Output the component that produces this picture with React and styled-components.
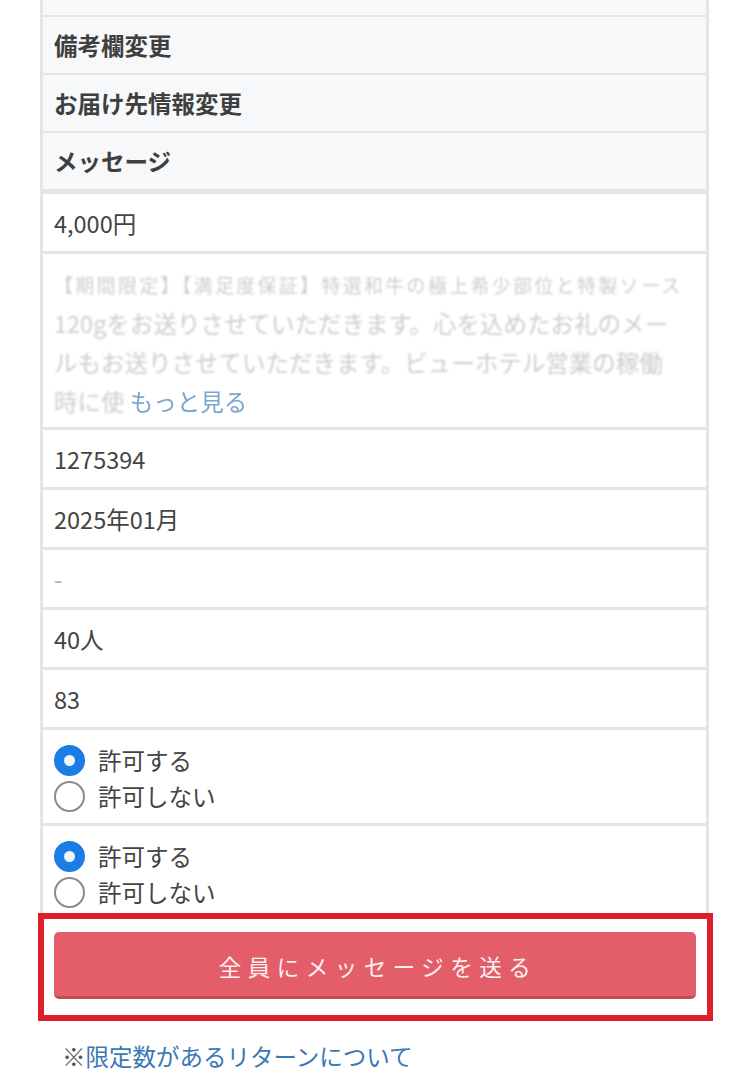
import React from "react";
import styled, { createGlobalStyle } from "styled-components";

const GlobalStyle = createGlobalStyle`
  body {
    margin: 0;
    background: #fff;
    font-family: "Noto Sans CJK JP", "Noto Sans", sans-serif;
    color: #444;
  }
`;

const COLORS = {
  border: "#e5e5e5",
  head: "#f7f8fa",
  text: "#444444",
  blue: "#1a7ee6",
  link: "#3b78b6",
  red: "#dc1f2a",
  button: "#e35e68",
};

// the first heading sits above the visible area, only its lower edge shows
const headers = ["", "備考欄変更", "お届け先情報変更", "メッセージ"];
const values = ["1275394", "2025年01月", "-", "40人", "83"];

const App = () => {
  return (
    <>
      <GlobalStyle />
      <Page>
        <Table>
          {headers.map((h, i) => (
            <HeadRow key={i} $last={i === headers.length - 1}>
              {h}
            </HeadRow>
          ))}
          <Row>4,000円</Row>
          <Description>
            <Blurred>
              <SmallLine>【期間限定】【満足度保証】特選和牛の極上希少部位と特製ソース</SmallLine>
              <br />
              120gをお送りさせていただきます。心を込めたお礼のメー
              <br />
              ルもお送りさせていただきます。ビューホテル営業の稼働
              <br />
              時に使
            </Blurred>{" "}
            <More>もっと見る</More>
          </Description>
          {values.map((v) => (
            <Row key={v} $faint={v === "-"}>
              {v}
            </Row>
          ))}
          <RadioRow>
            <Option>
              <Radio $checked />
              許可する
            </Option>
            <Option>
              <Radio />
              許可しない
            </Option>
          </RadioRow>
          <RadioRow $last>
            <Option>
              <Radio $checked />
              許可する
            </Option>
            <Option>
              <Radio />
              許可しない
            </Option>
          </RadioRow>
        </Table>
        <Highlight>
          <SendButton>全員にメッセージを送る</SendButton>
        </Highlight>
        <Note>
          ※<NoteLink href="#">限定数があるリターンについて</NoteLink>
        </Note>
      </Page>
    </>
  );
};

const Page = styled.div`
  margin-top: -41px;
  padding-bottom: 30px;
`;

const Table = styled.div`
  margin-left: 40px;
  width: 669px;
  box-sizing: border-box;
  border-left: 3px solid ${COLORS.border};
  border-right: 3px solid ${COLORS.border};
`;

const HeadRow = styled.div`
  height: 56px;
  display: flex;
  align-items: center;
  padding-left: 11px;
  background: ${COLORS.head};
  border-bottom: ${(p) => (p.$last ? 5 : 2)}px solid ${COLORS.border};
  font-size: 23.5px;
  font-weight: 700;
  color: #3f3f3f;
`;

const Row = styled.div`
  height: 60px;
  box-sizing: border-box;
  display: flex;
  align-items: center;
  padding: 1px 0 0 11px;
  border-bottom: 3px solid ${COLORS.border};
  font-size: 23.5px;
  color: ${(p) => (p.$faint ? "#aaa" : COLORS.text)};
`;

const Description = styled.div`
  height: 163px;
  padding: 10px 11px 0;
  border-bottom: 3px solid ${COLORS.border};
  font-size: 23.5px;
  line-height: 39px;
  white-space: nowrap;
  overflow: hidden;
`;

const Blurred = styled.span`
  color: #cdcdcd;
  filter: blur(0.9px);
`;

const SmallLine = styled.span`
  font-size: 19px;
  letter-spacing: 2.3px;
`;

const More = styled.span`
  color: #7ba6d2;
  filter: blur(0.5px);
`;

const RadioRow = styled.div`
  padding: 12px 11px ${(p) => (p.$last ? 3 : 9)}px;
  border-bottom: ${(p) => (p.$last ? 0 : 3)}px solid ${COLORS.border};
  display: flex;
  flex-direction: column;
`;

const Option = styled.label`
  display: flex;
  align-items: center;
  gap: 13px;
  height: 36px;
  font-size: 23.5px;
  color: ${COLORS.text};
`;

const Radio = styled.span`
  width: 31px;
  height: 31px;
  box-sizing: border-box;
  border-radius: 50%;
  flex-shrink: 0;
  border: ${(p) => (p.$checked ? `10px solid ${COLORS.blue}` : "2.5px solid #8a8a8a")};
  background: ${(p) => (p.$checked ? "#eef6ff" : "#fff")};
`;

const Highlight = styled.div`
  margin-left: 38px;
  width: 675px;
  height: 108px;
  box-sizing: border-box;
  border: 6px solid ${COLORS.red};
  padding: 13px 11px 16px 10px;
  background: #fff;
`;

const SendButton = styled.button`
  width: 100%;
  height: 67px;
  border: none;
  border-bottom: 3px solid #c04c55;
  border-radius: 5px;
  background: ${COLORS.button};
  color: #fdf0f1;
  font-family: "Noto Sans CJK JP", sans-serif;
  font-size: 22.5px;
  font-weight: 400;
  letter-spacing: 6.5px;
  padding: 3px 0 0 6px;
  cursor: pointer;
`;

const Note = styled.p`
  margin: 17px 0 0 62px;
  font-size: 23.5px;
  line-height: 36px;
  color: #555;
`;

const NoteLink = styled.a`
  color: ${COLORS.link};
  text-decoration: none;
`;

export default App;
